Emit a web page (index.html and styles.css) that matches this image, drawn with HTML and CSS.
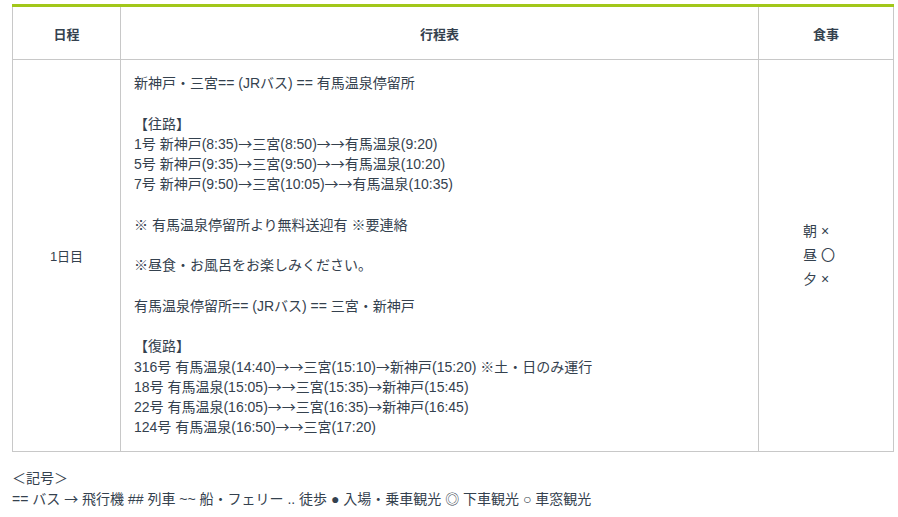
FILE: index.html
```html
<!DOCTYPE html>
<html lang="ja">
<head>
<meta charset="utf-8">
<link rel="stylesheet" href="styles.css">
</head>
<body>
<table class="sched">
  <thead>
    <tr>
      <th class="c-day">日程</th>
      <th class="c-plan">行程表</th>
      <th class="c-meal">食事</th>
    </tr>
  </thead>
  <tbody>
    <tr>
      <td class="c-day">1日目</td>
      <td class="c-plan">
        <p>新神戸・三宮== (JRバス) == 有馬温泉停留所</p>
        <p>【往路】<br>1号 新神戸(8:35)<span class="j">→</span>三宮(8:50)<span class="j">→→</span>有馬温泉(9:20)<br>5号 新神戸(9:35)<span class="j">→</span>三宮(9:50)<span class="j">→→</span>有馬温泉(10:20)<br>7号 新神戸(9:50)<span class="j">→</span>三宮(10:05)<span class="j">→→</span>有馬温泉(10:35)</p>
        <p>※ 有馬温泉停留所より無料送迎有 ※要連絡</p>
        <p>※昼食・お風呂をお楽しみください。</p>
        <p>有馬温泉停留所== (JRバス) == 三宮・新神戸</p>
        <p class="last">【復路】<br>316号 有馬温泉(14:40)<span class="j">→→</span>三宮(15:10)<span class="j">→</span>新神戸(15:20) ※土・日のみ運行<br>18号 有馬温泉(15:05)<span class="j">→→</span>三宮(15:35)<span class="j">→</span>新神戸(15:45)<br>22号 有馬温泉(16:05)<span class="j">→→</span>三宮(16:35)<span class="j">→</span>新神戸(16:45)<br>124号 有馬温泉(16:50)<span class="j">→→</span>三宮(17:20)</p>
      </td>
      <td class="c-meal">
        <div class="meals">
          <div>朝 ×</div>
          <div>昼 <span class="j">〇</span></div>
          <div>夕 ×</div>
        </div>
      </td>
    </tr>
  </tbody>
</table>
<div class="legend">
  <p><span class="j">＜記号＞</span></p>
  <p>== バス <span class="j">→</span> 飛行機 ## 列車 ~~ 船・フェリー .. 徒歩 ● 入場・乗車観光 ◎ 下車観光 ○ 車窓観光</p>
</div>
</body>
</html>
```
FILE: styles.css
```css
html, body {
  margin: 0;
  padding: 0;
  background: #fff;
}
body {
  padding: 4px 4px 0 12px;
  font-family: "Liberation Sans", "Noto Sans CJK JP", sans-serif;
  font-size: 14px;
  color: #34414e;
}
.j {
  font-family: "Noto Sans CJK JP", sans-serif;
  line-height: 1;
}
.sched {
  width: 882px;
  border-collapse: collapse;
  border-top: 3px solid #a2c71a;
  table-layout: fixed;
}
.sched th,
.sched td {
  border: 1px solid #c8c8c8;
  border-top: none;
}
.sched thead th {
  height: 52px;
  padding: 0;
  font-weight: bold;
  font-size: 13px;
  text-align: center;
  vertical-align: middle;
  border-bottom: 1px solid #c8c8c8;
}
.sched .c-day { width: 107px; }
.sched .c-meal { width: 134px; }
.sched td.c-day {
  text-align: center;
  vertical-align: middle;
  font-size: 13px;
}
.sched td.c-plan {
  padding: 13px 13px 13px 13px;
  line-height: 20.25px;
  vertical-align: top;
}
.c-plan p {
  margin: 0 0 20.25px;
}
.c-plan p.last { margin-bottom: 0; }
.sched td.c-meal {
  text-align: left;
  vertical-align: middle;
  padding: 0 0 0 44px;
}
.meals {
  line-height: 24px;
}
.legend {
  padding-top: 16px;
  line-height: 21px;
}
.legend p { margin: 0; }
```
